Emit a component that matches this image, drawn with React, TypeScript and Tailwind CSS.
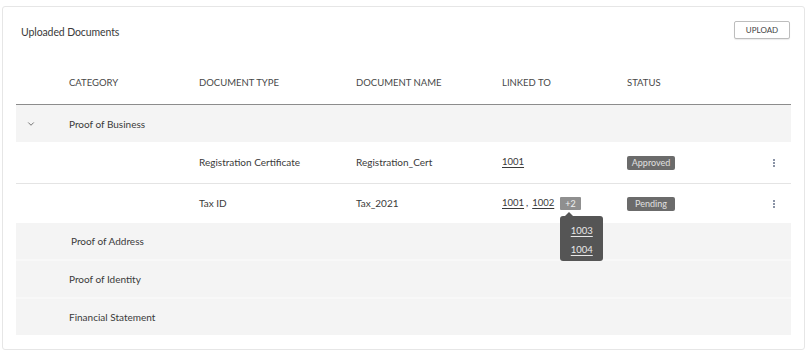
import { ChevronDown } from 'lucide-react';

type DocRow = {
  type: string;
  name: string;
  links: string[];
  extra?: string[];
  status: string;
};

const docs: DocRow[] = [
  { type: 'Registration Certificate', name: 'Registration_Cert', links: ['1001'], status: 'Approved' },
  { type: 'Tax ID', name: 'Tax_2021', links: ['1001', '1002'], extra: ['1003', '1004'], status: 'Pending' },
];

const otherCategories = ['Proof of Address', 'Proof of Identity', 'Financial Statement'];

const cols = 'grid grid-cols-[53px_130px_157px_146px_125px_1fr_40px] items-center';

const Kebab = () => (
  <div className="flex flex-col items-center gap-[1px] w-[3px]">
    <span className="block w-[2px] h-[2px] bg-[#8a93a6]" />
    <span className="block w-[2px] h-[2px] bg-[#8a93a6]" />
    <span className="block w-[2px] h-[2px] bg-[#8a93a6]" />
  </div>
);

const App = () => {
  return (
    <div className="w-[807px] h-[353px] bg-white pt-[6px] pl-[2px] pr-[2px] font-['Lato',sans-serif] text-[#3a3a3a]">
      <div className="h-[344px] border border-[#e6e6e6] rounded-[3px] px-[13px]">
        {/* Title bar */}
        <div className="flex items-center justify-between h-[50px] pl-[5px] pr-[1px]">
          <span className="mt-[2px] text-[10.5px] tracking-[-0.1px]">Uploaded Documents</span>
          <button className="-mt-[5px] h-[18px] w-[56px] border border-[#bdbdbd] rounded-[2px] text-[8px] text-[#444] bg-white shadow-[0_1px_1px_rgba(0,0,0,0.08)]">
            UPLOAD
          </button>
        </div>

        {/* Header */}
        <div className={`${cols} h-[48px] pt-[5px] border-b border-[#8c8c8c] text-[9.5px] text-[#484848]`}>
          <span />
          <span>CATEGORY</span>
          <span>DOCUMENT TYPE</span>
          <span>DOCUMENT NAME</span>
          <span>LINKED TO</span>
          <span>STATUS</span>
        </div>

        {/* Proof of Business */}
        <div className={`${cols} h-[37px] pt-[1px] bg-[#f4f4f4] text-[10px]`}>
          <span className="pl-[10px] text-[#444]">
            <ChevronDown className="w-[10px] h-[10px]" strokeWidth={1.75} />
          </span>
          <span>Proof of Business</span>
        </div>

        {docs.map((d, i) => (
          <div
            key={d.type}
            className={`${cols} ${i === 0 ? 'h-[42px] border-b border-[#e4e4e4]' : 'h-[39px]'} text-[10px] bg-white`}
          >
            <span />
            <span />
            <span>{d.type}</span>
            <span>{d.name}</span>
            <span className="flex items-center text-[9.5px]">
              {d.links.map((l, j) => (
                <span key={l} className="flex items-center">
                  <span className="underline underline-offset-2">{l}</span>
                  {j < d.links.length - 1 && <span className="ml-[2px] mr-[4px]">,</span>}
                </span>
              ))}
              {d.extra && (
                <span className="relative ml-[6px]">
                  <span className="block h-[13px] px-[5px] leading-[13px] bg-[#8f8f8f] text-[#f0f0f0] text-[9px] rounded-[1px]">
                    +{d.extra.length}
                  </span>
                  <div className="absolute left-0 top-[19px] z-10 w-[43px] rounded-[3px] bg-[#555] pt-[9px] pb-[6px] flex flex-col items-center gap-[8px]">
                    <span className="absolute -top-[4px] left-[5px] w-0 h-0 border-l-[4px] border-r-[4px] border-b-[4px] border-l-transparent border-r-transparent border-b-[#555]" />
                    {d.extra.map((e) => (
                      <span key={e} className="text-[9.5px] leading-[11px] text-[#e8e8e8] underline underline-offset-2">
                        {e}
                      </span>
                    ))}
                  </div>
                </span>
              )}
            </span>
            <span>
              <span className="inline-block w-[48px] h-[14px] leading-[14px] text-center bg-[#6b6b6b] text-[#e0e0e0] text-[9px] rounded-[2px]">
                {d.status}
              </span>
            </span>
            <span className="flex justify-center pl-[5px]">
              <Kebab />
            </span>
          </div>
        ))}

        {otherCategories.map((c, i) => (
          <div
            key={c}
            className={`${cols} ${i < otherCategories.length - 1 ? 'h-[38px] border-b-2 border-[#f8f8f8]' : 'h-[36px]'} bg-[#f4f4f4] text-[10px]`}
          >
            <span />
            <span className={i === 0 ? 'pl-[2px]' : ''}>{c}</span>
          </div>
        ))}
      </div>
    </div>
  );
};

export default App;
